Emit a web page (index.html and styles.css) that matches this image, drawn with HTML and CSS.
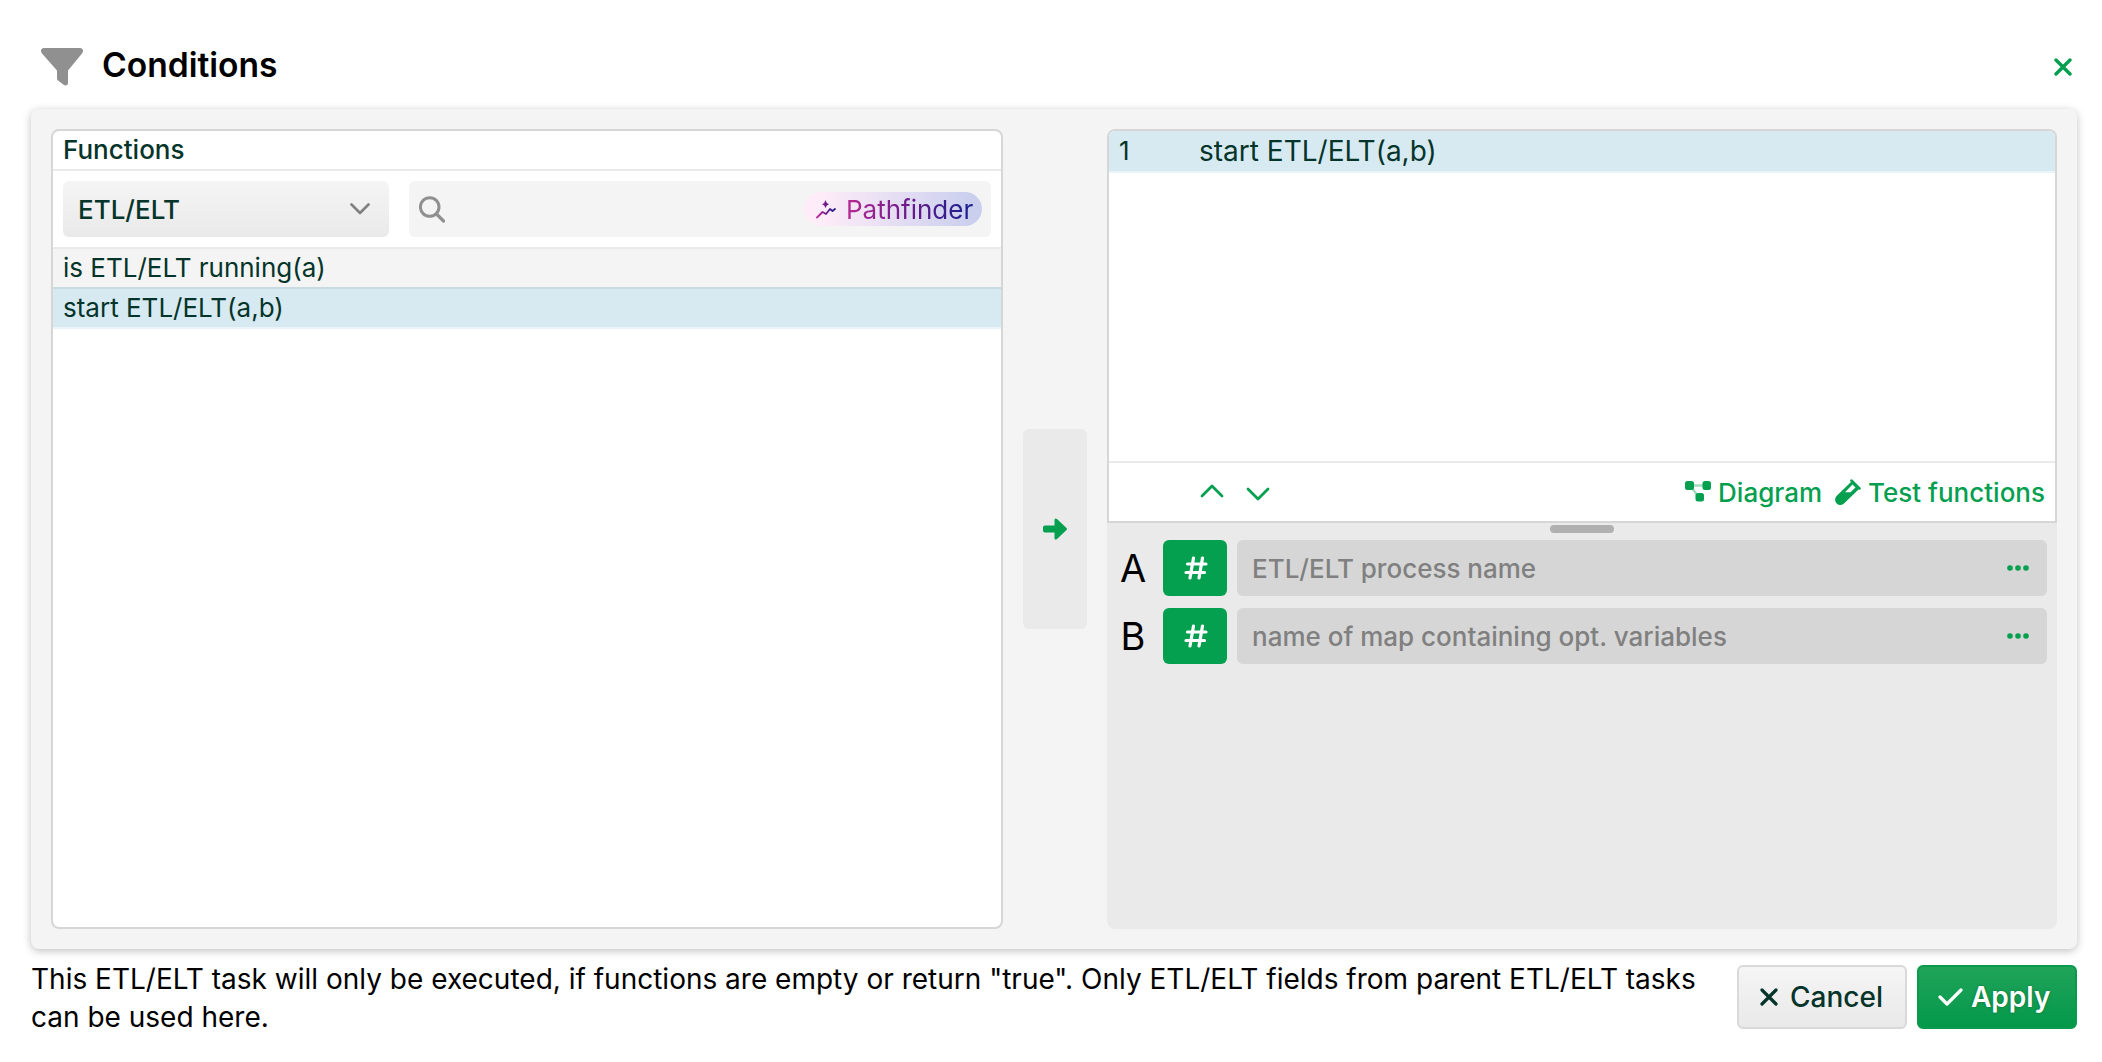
FILE: index.html
```
<!DOCTYPE html>
<html lang="en">
<head>
    <meta charset="UTF-8">
    <meta name="viewport" content="width=device-width, initial-scale=1.0">
    <link rel="stylesheet" href="styles.css">
    <title>Conditions</title>
</head>
<body>

    <header class="dialog-header">
        <svg class="funnel" width="42" height="38" viewBox="0 0 42 38"><path d="M3 0H39C42 0 43 3 41 5.500L27 22.500V35C27 37.500 24.500 38 23 37L17 32.500Q16 31.500 16 30V22.500L1 5.500C-1 3 0 0 3 0Z" fill="#909090"/></svg>
        <h1>Conditions</h1>
        <svg class="close" width="18" height="18" viewBox="0 0 18 18"><path d="M2 2L16 16M16 2L2 16" fill="none" stroke="#049f4f" stroke-width="3.400" stroke-linecap="round"/></svg>
    </header>

    <main class="panel">
        <section class="functions">
            <div class="functions-title">Functions</div>
            <div class="toolbar">
                <div class="select">
                    <span>ETL/ELT</span>
                    <svg width="20" height="12" viewBox="0 0 20 12"><path d="M1.500 1.500L10 10L18.500 1.500" fill="none" stroke="#808080" stroke-width="2.600" stroke-linecap="round" stroke-linejoin="round"/></svg>
                </div>
                <div class="search">
                    <svg width="26" height="27" viewBox="0 0 26 27"><circle cx="10.700" cy="11" r="9.300" fill="none" stroke="#909090" stroke-width="3"/><path d="M17.500 18L24.500 25" stroke="#909090" stroke-width="3.200" stroke-linecap="round"/></svg>
                    <div class="pathfinder">
                        <svg width="20" height="20" viewBox="0 0 20 20">
                            <defs>
                                <linearGradient id="pf" x1="0" y1="0" x2="20" y2="0" gradientUnits="userSpaceOnUse">
                                    <stop offset="0" stop-color="#d2309b"/>
                                    <stop offset=".5" stop-color="#6a1b8a"/>
                                    <stop offset="1" stop-color="#14208c"/>
                                </linearGradient>
                            </defs>
                            <path d="M1 18.500L6.500 13L10 15L14 10L16.500 12L19 10" fill="none" stroke="url(#pf)" stroke-width="1.800" stroke-linecap="round" stroke-linejoin="round"/>
                            <path d="M9.500 1L10.800 4L13 5.200L10.800 6.400L9.500 9L8.200 6.400L6 5.200L8.200 4Z" fill="url(#pf)"/>
                        </svg>
                        <span>Pathfinder</span>
                    </div>
                </div>
            </div>
            <ul class="function-list">
                <li>is ETL/ELT running(a)</li>
                <li class="selected">start ETL/ELT(a,b)</li>
            </ul>
        </section>

        <div class="transfer">
            <svg width="26" height="22" viewBox="0 0 26 22"><path d="M3 7.500H12.500V2Q12.500 -.5 15 1L24.500 10Q25.500 11 24.500 12L15 21Q12.500 22.500 12.500 20V14.500H3Q1 14.500 1 12.500V9.500Q1 7.500 3 7.500Z" fill="#049f4f"/></svg>
        </div>

        <section class="editor">
            <div class="code">
                <div class="code-line"><span class="line-number">1</span><span>start ETL/ELT(a,b)</span></div>
                <div class="code-actions">
                    <svg class="up" width="24" height="14" viewBox="0 0 24 14"><path d="M2 12L12 2L22 12" fill="none" stroke="#049f4f" stroke-width="2.800" stroke-linecap="round" stroke-linejoin="round"/></svg>
                    <svg class="down" width="24" height="14" viewBox="0 0 24 14"><path d="M2 2L12 12L22 2" fill="none" stroke="#049f4f" stroke-width="2.800" stroke-linecap="round" stroke-linejoin="round"/></svg>
                    <div class="link diagram">
                        <svg width="26" height="22" viewBox="0 0 26 22"><path d="M8 4.500H18M7 7L12 14" stroke="#a6dabf" stroke-width="2.400"/><g fill="#049f4f"><rect y="0" width="9" height="9" rx="2.500"/><rect x="17.500" y="0" width="8.500" height="9" rx="2.500"/><rect x="10.500" y="12" width="8.500" height="8.500" rx="2.500"/></g></svg>
                        <span>Diagram</span>
                    </div>
                    <div class="link test">
                        <svg width="26" height="26" viewBox="0 0 26 26"><path fill-rule="evenodd" d="M15.500 .7Q16.500 -.3 17.500 .7L25.300 8.500Q26.300 9.500 25.300 10.500Q24.500 11.200 23.500 10.500L9 24.500Q5 27.500 1.700 24.500Q-1.500 21 1.500 17L16 3L15.500 2.500Q14.700 1.500 15.500 .7ZM17.500 5.500L10 13.200H15.500L20.500 8.400Z" fill="#049f4f"/></svg>
                        <span>Test functions</span>
                    </div>
                </div>
            </div>

            <div class="handle"></div>

            <div class="param">
                <span class="param-name">A</span>
                <div class="hash"><svg width="24" height="24" viewBox="0 0 24 24"><path d="M9.500 2L6 22M18.500 2L15 22M3.500 8H22M2 16.500H20.500" fill="none" stroke="#fff" stroke-width="3.200" stroke-linecap="round"/></svg></div>
                <div class="field">
                    <span>ETL/ELT process name</span>
                    <svg width="22" height="6" viewBox="0 0 22 6" fill="#049f4f"><circle cx="3" cy="3" r="2.800"/><circle cx="11" cy="3" r="2.800"/><circle cx="19" cy="3" r="2.800"/></svg>
                </div>
            </div>
            <div class="param">
                <span class="param-name">B</span>
                <div class="hash"><svg width="24" height="24" viewBox="0 0 24 24"><path d="M9.500 2L6 22M18.500 2L15 22M3.500 8H22M2 16.500H20.500" fill="none" stroke="#fff" stroke-width="3.200" stroke-linecap="round"/></svg></div>
                <div class="field">
                    <span>name of map containing opt. variables</span>
                    <svg width="22" height="6" viewBox="0 0 22 6" fill="#049f4f"><circle cx="3" cy="3" r="2.800"/><circle cx="11" cy="3" r="2.800"/><circle cx="19" cy="3" r="2.800"/></svg>
                </div>
            </div>
        </section>
    </main>

    <footer class="dialog-footer">
        <p>This ETL/ELT task will only be executed, if functions are empty or return "true". Only ETL/ELT fields from parent ETL/ELT tasks can be used here.</p>
        <div class="button cancel">
            <svg width="18" height="18" viewBox="0 0 18 18"><path d="M2 2L16 16M16 2L2 16" fill="none" stroke="#05342a" stroke-width="3.200" stroke-linecap="round"/></svg>
            <span>Cancel</span>
        </div>
        <div class="button apply">
            <svg width="25" height="18" viewBox="0 0 25 18"><path d="M2 9L9 16L23 2" fill="none" stroke="#fff" stroke-width="3.200" stroke-linecap="round" stroke-linejoin="round"/></svg>
            <span>Apply</span>
        </div>
    </footer>

</body>
</html>
```
FILE: styles.css
```
* {
    box-sizing: border-box;
}

body {
    margin: 0;
    height: 1062px;
    padding: 0 25px 0 31px;
    background: #fff;
    font-family: Inter, sans-serif;
    font-size: 26px;
    color: #05342a;
    overflow: hidden;
}

svg {
    display: block;
    flex: none;
}

/* Header */
.dialog-header {
    display: flex;
    align-items: center;
    height: 109px;
    padding: 24px 5px 0 10px;
}

h1 {
    margin: 0 auto 4px 19px;
    font-size: 33.6px;
    font-weight: 600;
    line-height: 40px;
    color: #000;
}

/* Main panel */
.panel {
    display: grid;
    grid-template-columns: 952px 64px 950px;
    gap: 20px;
    height: 840px;
    padding: 20px;
    background: #f4f4f4;
    border-radius: 8px;
    box-shadow: 0 2px 8px rgba(0, 0, 0, 0.25);
}

.functions {
    border: 2px solid #d6d6d6;
    border-radius: 8px;
    background: #fff;
    overflow: hidden;
}

.functions-title {
    height: 40px;
    padding-left: 10px;
    border-bottom: 2px solid #eaeaea;
    font-weight: 500;
    line-height: 38px;
}

.toolbar {
    display: flex;
    gap: 20px;
    height: 78px;
    padding: 10px;
    border-bottom: 2px solid #eaeaea;
}

.select {
    display: flex;
    align-items: center;
    justify-content: space-between;
    width: 326px;
    padding: 0 19px 0 15px;
    border-radius: 6px;
    background: linear-gradient(#f5f5f5, #e9e9e9);
    font-weight: 500;
}

.search {
    display: flex;
    flex: 1;
    align-items: center;
    justify-content: space-between;
    padding: 0 9px 0 10px;
    border-radius: 6px;
    background: #f4f4f4;
}

.pathfinder {
    display: flex;
    align-items: center;
    gap: 10px;
    width: 178px;
    height: 34px;
    padding-left: 12px;
    border-radius: 17px;
    background: linear-gradient(90deg, #feecf8 10%, #cacfee 95%);
}

.pathfinder span {
    background: linear-gradient(90deg, #b52a93, #6a1b8a 50%, #14208c);
    -webkit-background-clip: text;
    background-clip: text;
    color: transparent;
}

.function-list {
    margin: 0;
    padding: 0;
    list-style: none;
}

.function-list li {
    height: 40px;
    padding-left: 10px;
    border-bottom: 2px solid #c9dbe1;
    background: #f4f4f4;
    line-height: 38px;
}

.function-list .selected,
.code-line {
    background: #d8eaf1;
    border-bottom: 2px solid #eaf4f8;
}

/* Arrow button between the two columns */
.transfer {
    display: flex;
    align-items: center;
    justify-content: center;
    align-self: center;
    height: 200px;
    border-radius: 6px;
    background: #eaeaea;
}

/* Right column */
.editor {
    border-radius: 8px;
    background: #eaeaea;
    overflow: hidden;
}

.code {
    display: flex;
    flex-direction: column;
    justify-content: space-between;
    height: 394px;
    border: 2px solid #d6d6d6;
    border-radius: 8px 8px 0 0;
    background: #fff;
    overflow: hidden;
}

.code-line {
    display: flex;
    height: 42px;
    padding-left: 10px;
    font-size: 28px;
    line-height: 40px;
}

.line-number {
    width: 80px;
    font-size: 26px;
}

.code-actions {
    display: flex;
    align-items: center;
    height: 60px;
    padding: 0 10px 0 91px;
    border-top: 2px solid #eaeaea;
    font-weight: 500;
    color: #049f4f;
}

.up {
    margin-bottom: 2px;
}

.down {
    margin: 4px 0 0 22px;
}

.link {
    display: flex;
    align-items: center;
    gap: 7px;
}

.diagram {
    margin-left: auto;
}

.test {
    margin-left: 13px;
}

.handle {
    width: 64px;
    height: 8px;
    margin: 2px auto 7px;
    border-radius: 4px;
    background: #b0b0b0;
}

.param {
    display: flex;
    align-items: center;
    height: 56px;
    margin-bottom: 12px;
    padding-right: 10px;
}

.param-name {
    width: 56px;
    padding-right: 4px;
    font-size: 38px;
    text-align: center;
    color: #000;
}

.hash {
    display: flex;
    align-items: center;
    justify-content: center;
    width: 64px;
    height: 56px;
    margin-right: 10px;
    padding-left: 2px;
    border-radius: 6px;
    background: #049f4f;
}

.field {
    display: flex;
    flex: 1;
    align-items: center;
    justify-content: space-between;
    height: 56px;
    padding: 0 18px 0 15px;
    border-radius: 6px;
    background: #d6d6d6;
    font-weight: 500;
    color: #808080;
}

/* Footer */
.dialog-footer {
    display: flex;
    gap: 10px;
    padding-top: 10px;
}

.dialog-footer p {
    flex: 1;
    margin: 1px 0 0;
    font-size: 28px;
    line-height: 38px;
    color: #000;
}

.button {
    display: flex;
    align-items: center;
    gap: 12px;
    height: 64px;
    margin-top: 6px;
    padding-left: 21px;
    border: 2px solid #d9d9d9;
    border-radius: 6px;
    background: linear-gradient(#f5f5f5, #e9e9e9);
    font-size: 28px;
    font-weight: 500;
}

.cancel {
    width: 170px;
}

.apply {
    gap: 8px;
    width: 160px;
    padding-left: 19px;
    border-color: #0b9a4c;
    background: linear-gradient(#20a45a, #04984a);
    font-weight: 600;
    color: #fff;
    text-shadow: 0 0 3px rgba(0, 0, 0, 0.3);
}
```
